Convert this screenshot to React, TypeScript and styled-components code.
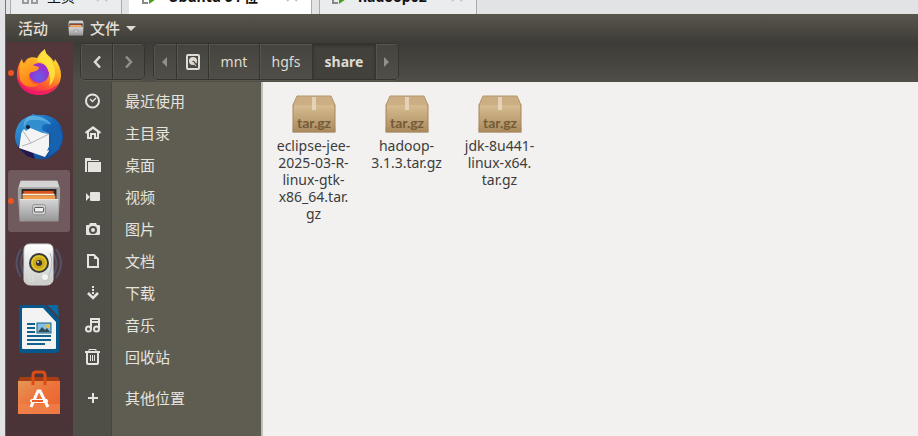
import React from "react";
import styled, { createGlobalStyle, css } from "styled-components";

const ui = '"Noto Sans", "Noto Sans CJK SC", sans-serif';

const GlobalStyle = createGlobalStyle`
  * { box-sizing: border-box; }
  body { margin: 0; background: #e2e3e5; font-family: ${ui}; overflow: hidden; }
  button { font: inherit; color: inherit; border: 0; padding: 0; background: none; cursor: pointer; }
`;

const Screen = styled.div`
  height: 100vh;
  display: flex;
  flex-direction: column;
`;

const TabStrip = styled.nav`
  flex: none;
  height: 14px;
  margin-left: 5px;
  padding-left: 4px;
  border-left: 1px solid #77787a;
  display: flex;
  align-items: flex-end;
  gap: 7px;
  overflow: hidden;
  background: #e2e3e5;
`;

const VmTab = styled.button<{ $width: number; $active?: boolean; $machine?: boolean }>`
  flex: 0 0 ${(p) => p.$width}px;
  height: 34px;
  padding: 0 12px 0 10px;
  display: flex;
  align-items: center;
  gap: 8px;
  white-space: nowrap;
  color: #111;
  font-size: 14px;
  font-weight: ${(p) => (p.$machine ? 700 : 400)};
  line-height: 20px;
  border: solid #a9abae;
  border-width: 0 1px;
  background: ${(p) => (p.$active ? "#fff" : "#ebecee")};
  ${(p) => p.$active && css`border-left-color: #fff;`}
  & > svg:last-child { margin-left: auto; }
`;

const Machine = styled.main`
  flex: 1;
  min-height: 0;
  margin-left: 5px;
  border-left: 1px solid #66605e;
  display: flex;
  flex-direction: column;
  background: #4f363a;
`;

const TopBar = styled.header`
  flex: none;
  height: 28px;
  padding-left: 12px;
  display: flex;
  align-items: center;
  gap: 20px;
  color: #e2dfd8;
  font-size: 15px;
  font-weight: 500;
  line-height: 28px;
  background: linear-gradient(#59564c, #3e3d38);
`;

const TopButton = styled.button`
  display: flex;
  align-items: center;
  gap: 6px;
`;

const Caret = styled.span`
  border: 5px solid transparent;
  border-top-color: #dfdbd2;
  border-bottom: 0;
`;

const Workspace = styled.div`
  flex: 1;
  min-height: 0;
  display: flex;
`;

const Dock = styled.nav`
  flex: 0 0 67px;
  display: flex;
  flex-direction: column;
  gap: 2px;
  padding-left: 2px;
  background: linear-gradient(#53373b, #4b3438);
`;

const DockItem = styled.button<{ $active?: boolean }>`
  flex: none;
  position: relative;
  width: 62px;
  height: 62px;
  display: flex;
  align-items: center;
  justify-content: center;
  border-radius: 3px;
  background: ${(p) => (p.$active ? "#705a5d" : "none")};
`;

const RunningDot = styled.span`
  position: absolute;
  left: 0;
  top: 28px;
  width: 6px;
  height: 6px;
  border-radius: 50%;
  background: #e95420;
`;

const Window = styled.section`
  flex: 1;
  min-width: 0;
  display: flex;
  flex-direction: column;
`;

const Toolbar = styled.div`
  flex: none;
  height: 40px;
  padding: 1px 7px;
  display: flex;
  align-items: flex-start;
  gap: 8px;
  background: linear-gradient(#3c3b37, #504e47);
`;

const ButtonGroup = styled.div`
  display: flex;
  height: 37px;
  border: 1px solid #353430;
  border-radius: 5px;
  overflow: hidden;
  box-shadow: 0 1px 0 #5b594f;
`;

const PathButton = styled.button<{ $width: number; $current?: boolean; $edge?: boolean }>`
  width: ${(p) => p.$width}px;
  display: flex;
  align-items: center;
  justify-content: center;
  color: #dfdbd2;
  font-size: 14px;
  line-height: 20px;
  background: linear-gradient(#45443f, #504e47);
  box-shadow: inset 1px 1px 0 #57554c;
  & + & { border-left: 1px solid #35342f; }
  ${(p) => p.$edge && css`color: #92908a;`}
  ${(p) => p.$current && css`
    font-weight: 700;
    background: #42413b;
    box-shadow: inset 0 2px 3px #34332f;
  `}
`;

const Content = styled.div`
  flex: 1;
  min-height: 0;
  display: flex;
`;

const Places = styled.nav`
  flex: 0 0 190px;
  padding-top: 3px;
  border-right: 2px solid #c1beb9;
  background: linear-gradient(90deg, #504f47 38px, #45443d 38px, #45443d 39px, #5f5d51 39px);
`;

const Place = styled.a<{ $separated?: boolean }>`
  height: 32px;
  margin-top: ${(p) => (p.$separated ? 9 : 0)}px;
  display: grid;
  grid-template-columns: 39px 1fr;
  column-gap: 13px;
  align-items: center;
  color: #e6e4df;
  font-size: 15px;
  line-height: 24px;
  text-decoration: none;
  & > svg { justify-self: center; }
`;

const Files = styled.div`
  flex: 1;
  min-width: 0;
  padding: 12px 4px;
  display: flex;
  flex-wrap: wrap;
  align-content: flex-start;
  align-items: flex-start;
  background: #f2f1ef;
`;

const FileItem = styled.button`
  width: 93px;
  display: flex;
  flex-direction: column;
  align-items: center;
  gap: 1px;
  color: #3c3c3c;
  font-size: 14px;
  line-height: 17px;
`;

const FileName = styled.span`
  white-space: nowrap;
`;

const NautilusIcon = ({ size }: { size: number }) => (
  <svg width={size} height={size} viewBox="0 0 48 48" aria-hidden="true">
    <defs>
      <linearGradient id="cab" x2="0" y2="1"><stop stopColor="#d6d6d6" /><stop offset="1" stopColor="#969696" /></linearGradient>
    </defs>
    <path d="M4 2h40l3 8v10l-2 26H3L1 20V10z" fill="#a2a2a2" />
    <path d="M4 2h40l2 7H2z" fill="#d4d4d4" />
    <path d="M5 11h38v11H5z" fill="#2b2624" />
    <path d="M7 13h33v4H7z" fill="#d9531e" />
    <path d="M6 16h35v2H6z" fill="#fff0cf" />
    <path d="M6 18h36v4H6z" fill="#f39b4c" />
    <path d="M3 22h42v24H3z" fill="url(#cab)" />
    <path d="M3 22h42v1H3z" fill="#eee" />
    <rect x="17" y="28" width="14" height="11" rx="2" fill="#d5d5d5" stroke="#8a8a8a" />
    <rect x="19" y="31" width="10" height="5" rx="1" fill="#eee" stroke="#444" />
  </svg>
);

const FirefoxIcon = () => (
  <svg width="48" height="48" viewBox="0 0 48 48" aria-hidden="true">
    <defs>
      <linearGradient id="fox" x1=".8" y1="0" x2=".3" y2="1"><stop stopColor="#fff44f" /><stop offset=".4" stopColor="#ffad22" /><stop offset=".7" stopColor="#ff5b2e" /><stop offset="1" stopColor="#ed1470" /></linearGradient>
      <linearGradient id="foxHead" x2=".4" y2="1"><stop stopColor="#ffbd27" /><stop offset="1" stopColor="#ff7b18" /></linearGradient>
      <radialGradient id="globe" cy=".7"><stop stopColor="#655fe6" /><stop offset="1" stopColor="#9a30d0" /></radialGradient>
    </defs>
    <path d="M30 0c0 6 6 7 9 13l1-3c4 5 6 11 6 16 0 11-9 20-22 20S2 37 2 26c0-5 1-11 5-16l1 5 4-5c3-2 7-2 10-1 2-4 5-7 8-9z" fill="url(#fox)" />
    <circle cx="24" cy="24" r="10" fill="url(#globe)" />
    <path d="M30 1c0 6 6 8 8 14 4 8 2 17-4 22 2-7 1-13-2-18-2-4-5-6-10-7 2-4 5-8 8-11z" fill="#ffe53e" opacity=".85" />
    <path d="M7 10c0 2 1 4 3 5 3-3 5-5 8-5-2 2-2 4-1 6l7 2c0 3-3 4-6 5-3 0-4 2-4 5 0 4 4 7 10 8-9 4-17 1-19-6-1-7-1-14 2-20z" fill="url(#foxHead)" />
    <path d="M3 29c4 9 11 13 21 13 8 0 15-3 20-8-3 8-11 12-20 12C12 46 5 40 3 29z" fill="#ed1766" opacity=".7" />
  </svg>
);

const ThunderbirdIcon = () => (
  <svg width="50" height="50" viewBox="0 0 50 50" aria-hidden="true">
    <defs><linearGradient id="bird" x2="1" y2="1"><stop stopColor="#42a5e0" /><stop offset=".5" stopColor="#1665b9" /><stop offset="1" stopColor="#163b86" /></linearGradient></defs>
    <path d="M18 2c3 1 6 1 9 1 13 0 22 8 22 21 0 6-2 12-6 16l-1 2-3 1-3 3-4 1C18 49 2 40 1 25c0-8 4-17 12-20 3-2 6-1 5-3z" fill="url(#bird)" />
    <path d="M7 27 4 36l9 8 8 3-4-12z" fill="#22174e" />
    <path d="m8 17 9-4 18 9v17l-4 6-26-9z" fill="#f4f4f4" />
    <path d="m9 19 8 12 18-9M8 34l9-3" fill="none" stroke="#b3b3b3" />
    <path d="M16 5c8-2 18 1 22 8-6-2-11-1-10 4 1 3 5 4 7 5-6 0-13-4-19-6l-4 3-2-2-3 4C6 14 10 8 16 5z" fill="#318fd0" />
    <path d="M16 4c9-1 18 3 22 10-7-7-13-6-21-6-4 0-6 4-7 8-1-7 2-10 6-12z" fill="#74c3ed" opacity=".6" />
    <path d="M36 12c2 8 2 18-3 27l4-2-3 8 10-7 4-8c2-10-4-18-12-18z" fill="#1762ae" />
    <circle cx="14" cy="15" r="2" fill="#182139" />
  </svg>
);

const SpeakerIcon = () => (
  <svg width="50" height="48" viewBox="0 0 50 48" aria-hidden="true">
    <defs><linearGradient id="speaker" x2="0" y2="1"><stop stopColor="#fff" /><stop offset="1" stopColor="#c8cbc7" /></linearGradient></defs>
    <path d="M7 8Q-2 22 7 36M10 11q-6 11 0 22M42 8q10 14 0 29M39 11q7 12 0 23" fill="none" stroke="#526587" strokeWidth="2" opacity=".6" />
    <path d="M16 3h18q5 0 5 6v30q-1 5-7 5H17q-6 0-7-5V9q0-6 6-6z" fill="url(#speaker)" stroke="#d4d6d3" />
    <path d="M14 5h20q3 0 4 4" fill="none" stroke="#fff" strokeWidth="2" />
    <circle cx="25" cy="22" r="10" fill="#353838" />
    <circle cx="25" cy="22" r="7" fill="#caa818" stroke="#e0c22a" strokeWidth="2" />
    <circle cx="25" cy="22" r="3" fill="#333" /><circle cx="24" cy="21" r="1" fill="#ddd" />
    <circle cx="32" cy="37" r="4" fill="#c9cbc8" /><circle cx="31" cy="36" r="3" fill="#f3f3f1" />
    <rect x="15" y="36" width="4" height="4" fill="none" stroke="#ddd" />
    <path d="M36 12q4 10-1 22" fill="none" stroke="#a9bbd1" />
  </svg>
);

const WriterIcon = () => (
  <svg width="44" height="50" viewBox="0 0 44 50" aria-hidden="true">
    <path d="M5 1h23l14 14v31q0 3-3 3H5q-3 0-3-3V4q0-3 3-3z" fill="#07578a" />
    <path d="M30 1h11l1 12z" fill="#0869a3" />
    <path d="M6 4h20l13 14v26q0 1-1 1H6q-1 0-1-1V5q0-1 1-1z" fill="#f3f3f3" />
    <path d="M10 20h8m-8 4h8m-8 4h8m-8 4h24m-24 4h24m-24 4h18" stroke="#12608e" strokeWidth="2" />
    <rect x="20" y="19" width="14" height="10" fill="#87bfe6" stroke="#12608e" />
    <path d="m21 28 4-5 3 3 2-2 3 4z" fill="#354b4e" /><circle cx="31" cy="22" r="2" fill="#eac436" />
  </svg>
);

const SoftwareIcon = () => (
  <svg width="44" height="46" viewBox="0 0 44 46" aria-hidden="true">
    <defs><linearGradient id="bag" x2="1" y2="1"><stop stopColor="#e49857" /><stop offset=".5" stopColor="#ed7138" /><stop offset="1" stopColor="#e9622c" /></linearGradient></defs>
    <path d="M3 7h38l2 4H1z" fill="#a63d13" />
    <path d="M1 11h42v33H1z" fill="url(#bag)" />
    <path d="M1 34h42v10H1z" fill="#f28752" opacity=".6" />
    <path d="M16 15V5q0-3 3-3h6q3 0 3 3v10" fill="none" stroke="#d94e17" strokeWidth="3" />
    <path d="m14 37 7-16h2l8 16" fill="none" stroke="#fff" strokeWidth="3" />
    <rect x="13" y="29" width="18" height="4" rx="2" fill="#fff" /><path d="M15 31h11" stroke="#e95b25" strokeWidth="2" />
  </svg>
);

const ArchiveIcon = ({ id }: { id: string }) => (
  <svg width="48" height="42" viewBox="0 0 48 42" aria-hidden="true">
    <defs><linearGradient id={id} x2="0" y2="1"><stop stopColor="#d8bd92" /><stop offset="1" stopColor="#a98a5d" /></linearGradient></defs>
    <path d="M2 33v6h44v-6z" fill="#aaa" opacity=".45" />
    <path d="M7 2h34l4 9H3z" fill="#ccae85" stroke="#b5946a" />
    <path d="M3 11h42v27H3z" fill={`url(#${id})`} stroke="#aa8457" />
    <path d="M4 11h40" stroke="#e7cda5" />
    <path d="M22 3h4v13h-4z" fill="#eadbc3" opacity=".8" />
    <text x="24" y="34" textAnchor="middle" fill="#755b37" fontFamily="Lato, sans-serif" fontSize="14" fontWeight="700">tar.gz</text>
  </svg>
);

type PlaceKind = "recent" | "home" | "desktop" | "video" | "photo" | "document" | "download" | "music" | "trash" | "other";

const placeShapes: Record<PlaceKind, React.ReactNode> = {
  recent: <g fill="none" stroke="currentColor"><circle cx="7.5" cy="8" r="6.5" strokeWidth="2" /><path d="m5 6 2.500 2.500L11 5" strokeWidth="1.4" /></g>,
  home: <path fill="currentColor" fillRule="evenodd" d="m8 1 8 6-1 2-1-1v6H9v-4H7v4H2V8L1 9 0 7zM4 7v5h1V8h6v4h1V7L8 4z" />,
  desktop: <path fill="currentColor" d="M0 1h6v2h8v1H2v11H0zm3 4h13v10H3z" />,
  video: <path fill="currentColor" d="m1 4 4 4-4 4zm4 0q0-1 1-1h8q1 0 1 1v7q0 1-1 1H6q-1 0-1-1z" />,
  photo: <path fill="currentColor" fillRule="evenodd" d="M5 2h6l1 2h2q1 0 1 1v8q0 1-1 1H2q-1 0-1-1V5q0-1 1-1h2zM8 5a4 4 0 1 0 0 8 4 4 0 0 0 0-8m0 2a2 2 0 1 1 0 4 2 2 0 0 1 0-4" />,
  document: <g><path fill="none" stroke="currentColor" strokeWidth="2" d="M3 2h6l4 4v8H3z" /><path fill="currentColor" d="M9 2v4h4z" /></g>,
  download: <g fill="none" stroke="currentColor"><path strokeWidth="2" d="M8 1v2m0 1v2m0 1v2" /><path strokeWidth="2.5" d="m3 8 5 5 5-5" /></g>,
  music: <g fill="none" stroke="currentColor" strokeWidth="2"><path d="M6 12V2h8v10M6 5h8" /><circle cx="3.5" cy="12" r="2.5" /><circle cx="11.5" cy="12" r="2.5" /></g>,
  trash: <g fill="none" stroke="currentColor"><path strokeWidth="2" d="M0 3h15M2 4v10q0 1 1 1h9q1 0 1-1V4" /><path d="M4 2V.5h7V2M5.500 6v6m2-6v6m2-6v6" /></g>,
  other: <path fill="currentColor" d="M7 3h2v4h4v2H9v4H7V9H3V7h4z" />,
};

const PlaceIcon = ({ kind }: { kind: PlaceKind }) => (
  <svg width="16" height="16" viewBox="0 0 16 16" aria-hidden="true">{placeShapes[kind]}</svg>
);

const Chevron = ({ forward }: { forward?: boolean }) => (
  <svg width="10" height="14" viewBox="0 0 10 14" aria-hidden="true">
    <path d={forward ? "m2 1.500 5 5.500-5 5.500" : "M8 1.500 3 7l5 5.500"} fill="none" stroke="currentColor" strokeWidth="2.500" />
  </svg>
);

const Triangle = ({ forward }: { forward?: boolean }) => (
  <svg width="6" height="10" viewBox="0 0 6 10" aria-hidden="true">
    <path d={forward ? "m0 0 5 5-5 5z" : "M5 0 0 5l5 5z"} fill="currentColor" />
  </svg>
);

const DiskIcon = () => (
  <svg width="16" height="18" viewBox="0 0 16 18" aria-hidden="true">
    <rect x="2" y="2" width="12" height="14" rx="1" fill="none" stroke="currentColor" strokeWidth="2" />
    <circle cx="8" cy="8" r="4" fill="currentColor" /><path d="m8 8 4 5" stroke="#45443f" strokeWidth="2" /><path d="m8 9 3 4" stroke="currentColor" />
  </svg>
);

const RunningIcon = () => (
  <svg width="20" height="18" viewBox="0 0 20 18" aria-hidden="true">
    <path d="M3 2v13h5" fill="none" stroke="#888" strokeWidth="2" /><path d="m9 2 10 7-10 7z" fill="#46a316" />
  </svg>
);

const HomeGridIcon = () => (
  <svg width="18" height="18" viewBox="0 0 18 18" aria-hidden="true">
    <path d="M2 1h5v5H2zm9 0h5v5h-5zM2 10h5v5H2zm9 0h5v5h-5z" fill="none" stroke="#999" strokeWidth="2" />
  </svg>
);

const CloseIcon = () => (
  <svg width="14" height="14" viewBox="0 0 14 14" aria-hidden="true">
    <path d="m2 1 10 10M12 1 2 11" fill="none" stroke="#c4c5c7" strokeWidth="2" />
  </svg>
);

const places: { kind: PlaceKind; label: string }[] = [
  { kind: "recent", label: "最近使用" },
  { kind: "home", label: "主目录" },
  { kind: "desktop", label: "桌面" },
  { kind: "video", label: "视频" },
  { kind: "photo", label: "图片" },
  { kind: "document", label: "文档" },
  { kind: "download", label: "下载" },
  { kind: "music", label: "音乐" },
  { kind: "trash", label: "回收站" },
  { kind: "other", label: "其他位置" },
];

const files = [
  ["eclipse-jee-", "2025-03-R-", "linux-gtk-", "x86_64.tar.", "gz"],
  ["hadoop-", "3.1.3.tar.gz"],
  ["jdk-8u441-", "linux-x64.", "tar.gz"],
];

export default function App() {
  return (
    <>
      <GlobalStyle />
      <Screen>
        <TabStrip>
          <VmTab $width={112}><HomeGridIcon />主页<CloseIcon /></VmTab>
          <VmTab $width={183} $active $machine><RunningIcon />Ubuntu 64 位<CloseIcon /></VmTab>
          <VmTab $width={158} $machine><RunningIcon />hadoop02<CloseIcon /></VmTab>
        </TabStrip>
        <Machine>
          <TopBar>
            <TopButton>活动</TopButton>
            <TopButton><NautilusIcon size={16} />文件<Caret /></TopButton>
          </TopBar>
          <Workspace>
            <Dock>
              <DockItem aria-label="Firefox"><RunningDot /><FirefoxIcon /></DockItem>
              <DockItem aria-label="Thunderbird"><ThunderbirdIcon /></DockItem>
              <DockItem aria-label="文件" $active><RunningDot /><NautilusIcon size={44} /></DockItem>
              <DockItem aria-label="Rhythmbox"><SpeakerIcon /></DockItem>
              <DockItem aria-label="LibreOffice Writer"><WriterIcon /></DockItem>
              <DockItem aria-label="Ubuntu Software"><SoftwareIcon /></DockItem>
            </Dock>
            <Window>
              <Toolbar>
                <ButtonGroup>
                  <PathButton $width={31} aria-label="后退"><Chevron /></PathButton>
                  <PathButton $width={32} $edge aria-label="前进"><Chevron forward /></PathButton>
                </ButtonGroup>
                <ButtonGroup>
                  <PathButton $width={22} $edge aria-label="向左滚动"><Triangle /></PathButton>
                  <PathButton $width={32} aria-label="磁盘"><DiskIcon /></PathButton>
                  <PathButton $width={51}>mnt</PathButton>
                  <PathButton $width={53}>hgfs</PathButton>
                  <PathButton $width={63} $current>share</PathButton>
                  <PathButton $width={23} $edge aria-label="向右滚动"><Triangle forward /></PathButton>
                </ButtonGroup>
              </Toolbar>
              <Content>
                <Places>
                  {places.map((p) => (
                    <Place key={p.kind} href={`#${p.kind}`} $separated={p.kind === "other"}>
                      <PlaceIcon kind={p.kind} />
                      {p.label}
                    </Place>
                  ))}
                </Places>
                <Files>
                  {files.map((lines) => (
                    <FileItem key={lines[0]}>
                      <ArchiveIcon id={`box-${lines[0]}`} />
                      <FileName>
                        {lines.map((line) => <React.Fragment key={line}>{line}<br /></React.Fragment>)}
                      </FileName>
                    </FileItem>
                  ))}
                </Files>
              </Content>
            </Window>
          </Workspace>
        </Machine>
      </Screen>
    </>
  );
}
